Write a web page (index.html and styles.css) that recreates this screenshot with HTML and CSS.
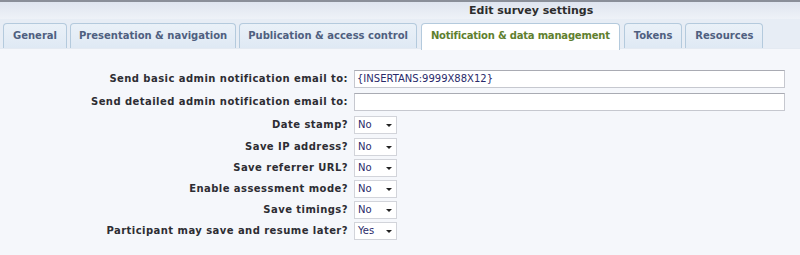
FILE: index.html
```html
<!DOCTYPE html>
<html lang="en">
<head>
  <meta charset="UTF-8">
  <title>Edit survey settings</title>
  <link rel="stylesheet" href="styles.css">
</head>
<body>
  <div class="header">Edit survey settings</div>
  <ul class="tabs">
    <li>General</li>
    <li>Presentation &amp; navigation</li>
    <li>Publication &amp; access control</li>
    <li class="active">Notification &amp; data management</li>
    <li>Tokens</li>
    <li>Resources</li>
  </ul>
  <div class="panel">
    <div class="row">
      <label>Send basic admin notification email to:</label>
      <input type="text" class="wide" value="{INSERTANS:9999X88X12}">
    </div>
    <div class="row">
      <label>Send detailed admin notification email to:</label>
      <input type="text" class="wide" value="">
    </div>
    <div class="row small">
      <label>Date stamp?</label>
      <span class="sel">No</span>
    </div>
    <div class="row small">
      <label>Save IP address?</label>
      <span class="sel">No</span>
    </div>
    <div class="row small">
      <label>Save referrer URL?</label>
      <span class="sel">No</span>
    </div>
    <div class="row small">
      <label>Enable assessment mode?</label>
      <span class="sel">No</span>
    </div>
    <div class="row small">
      <label>Save timings?</label>
      <span class="sel">No</span>
    </div>
    <div class="row small">
      <label>Participant may save and resume later?</label>
      <span class="sel">Yes</span>
    </div>
  </div>
</body>
</html>
```
FILE: styles.css
```css
body {
  margin: 0;
  background-color: #f5f7fb;
  font-family: "DejaVu Sans", Verdana, sans-serif;
  font-size: 11px;
  color: #333;
}
.header {
  height: 17px;
  border-top: 2px solid #8a8f99;
  background: linear-gradient(#dfe5ef, #eef2f8);
  font-weight: bold;
  font-size: 11px;
  line-height: 17px;
  padding-left: 469px;
  color: #2d2d2d;
}
.tabs {
  list-style: none;
  margin: 0;
  padding: 4px 0 0 3px;
  height: 25px;
  display: flex;
  gap: 3px;
  background: #e7edf5;
  border-bottom: 1px solid #e4eaf2;
}
.tabs li {
  height: 24px;
  line-height: 24px;
  padding: 0 9px;
  border: 1px solid #b4cadd;
  border-bottom: none;
  border-radius: 4px 4px 0 0;
  background: linear-gradient(#eaf1f8, #dfe9f4);
  font-weight: bold;
  font-size: 10px;
  color: #4f5f80;
}
.tabs li:nth-child(2),
.tabs li:nth-child(3) {
  padding: 0 8px;
}
.tabs li.active {
  background: #fff;
  height: 26px;
  padding: 0 9px;
  margin: 0 1px -1px;
  letter-spacing: -0.2px;
  color: #5f7f2f;
}
.panel {
  padding-top: 18px;
}
.row {
  display: flex;
  align-items: center;
  height: 23px;
}
.row.small {
  height: 21px;
}
.row.small:nth-child(3),
.row.small:nth-child(4) {
  margin-top: 1px;
}
.row label {
  width: 348px;
  text-align: right;
  padding-right: 6px;
  font-weight: bold;
  font-size: 10px;
  letter-spacing: 0.45px;
  color: #2d2d33;
}
input.wide {
  width: 425px;
  height: 16px;
  padding: 0 2px;
  border: 1px solid #c6c8cf;
  border-top: 1px solid #a9abb3;
  background: #fff;
  font-family: "DejaVu Sans", Verdana, sans-serif;
  font-size: 10px;
  color: #2a2a6a;
  margin: 0;
}
.sel {
  width: 35px;
  height: 16px;
  line-height: 16px;
  padding: 0 3px;
  border: 1px solid #d2d4da;
  background: #fff;
  font-size: 10px;
  color: #2a2a6a;
  position: relative;
}
.sel::after {
  content: "";
  position: absolute;
  right: 4px;
  top: 7px;
  border-left: 3px solid transparent;
  border-right: 3px solid transparent;
  border-top: 3px solid #222;
}
```
